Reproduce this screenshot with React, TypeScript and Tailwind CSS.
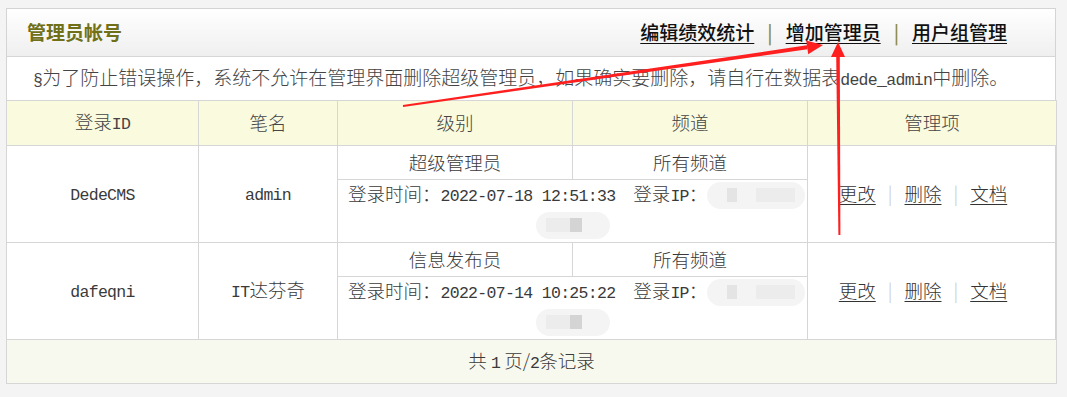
import type { ReactNode } from "react";

const cell = "border border-[#d6d6d6] text-center align-middle font-light";

function M({ children }: { children: ReactNode }) {
  return <span className="font-['Liberation_Mono',monospace] text-[16.5px] tracking-[-0.7px]">{children}</span>;
}

function Blur({ w, dark }: { w: number; dark: number[] }) {
  return (
    <span
      className="inline-flex h-[27px] items-center rounded-full bg-[#f4f4f4] px-[10px] blur-[0.6px]"
      style={{ width: w }}
    >
      {dark.map((c, i) => (
        <span key={i} className="h-[14px] w-[12px]" style={{ background: ["#f4f4f4", "#e4e4e4", "#d4d4d4", "#ececec"][c] }} />
      ))}
    </span>
  );
}

function Links() {
  return (
    <div className="flex items-center justify-center gap-[12px] pr-[18px] text-[#333]">
      <span className="underline underline-offset-[3px]">更改</span>
      <span className="text-[#c8c8c8]">|</span>
      <span className="underline underline-offset-[3px]">删除</span>
      <span className="text-[#c8c8c8]">|</span>
      <span className="underline underline-offset-[3px]">文档</span>
    </div>
  );
}

function LoginInfo({ time }: { time: string }) {
  return (
    <div className="flex flex-col items-center pb-[2px]">
      <div className="flex h-[30px] w-full items-center pl-[10px]">
        <span>
          登录时间：<M>{time}</M>
        </span>
        <span className="ml-[18px]">
          登录<M>IP</M>：
        </span>
        <Blur w={98} dark={[0, 1, 0, 0, 3, 3, 3, 3]} />
      </div>
      <div className="flex h-[30px] items-center">
        <Blur w={74} dark={[3, 3, 2]} />
      </div>
    </div>
  );
}

const rows = [
  { id: "DedeCMS", pen: <M>admin</M>, level: "超级管理员", time: "2022-07-18 12:51:33" },
  {
    id: "dafeqni",
    pen: (
      <>
        <M>IT</M>达芬奇
      </>
    ),
    level: "信息发布员",
    time: "2022-07-14 10:25:22",
  },
];

export default function App() {
  return (
    <div className="relative min-h-[397px] bg-[#f4f4f4] pt-[8px] font-['Noto_Sans_CJK_SC',sans-serif] text-[18.5px] font-light text-[#3a3a3a]">
      <div className="ml-[6px] w-[1050px] border border-[#d4d4d4] bg-white">
        <div className="flex h-[48px] items-center justify-between border-b border-[#d6d6d6] bg-linear-to-b from-white to-[#efefef] pl-[20px] pr-[48px] text-[19px]">
          <span className="font-bold text-[#707018]">管理员帐号</span>
          <div className="flex items-center gap-[13px] font-medium text-[#111]">
            <span className="underline underline-offset-[3px]">编辑绩效统计</span>
            <span className="text-[#8a8a40]">|</span>
            <span className="underline underline-offset-[3px]">增加管理员</span>
            <span className="text-[#8a8a40]">|</span>
            <span className="underline underline-offset-[3px]">用户组管理</span>
          </div>
        </div>
        <div className="flex h-[43px] items-center pl-[26px] text-[19px] text-[#444]">
          <span>
            <M>§</M>为了防止错误操作，系统不允许在管理界面删除超级管理员，如果确实要删除，请自行在数据表<M>dede_admin</M>中删除。
          </span>
        </div>
        <table className="-mx-px -mb-px w-[1050px] table-fixed border-collapse">
          <colgroup>
            <col className="w-[192px]" />
            <col className="w-[139px]" />
            <col className="w-[235px]" />
            <col className="w-[235px]" />
            <col className="w-[249px]" />
          </colgroup>
          <thead>
            <tr className="h-[45px] bg-[#fafadf] text-[#444]">
              <th className={cell}>
                登录<M>ID</M>
              </th>
              <th className={cell}>笔名</th>
              <th className={cell}>级别</th>
              <th className={cell}>频道</th>
              <th className={cell}>管理项</th>
            </tr>
          </thead>
          <tbody>
            {rows.map((r) => (
              <>
                <tr key={r.id + "a"} className="h-[34px]">
                  <td rowSpan={2} className={cell}>
                    <M>{r.id}</M>
                  </td>
                  <td rowSpan={2} className={cell}>
                    {r.pen}
                  </td>
                  <td className={cell}>{r.level}</td>
                  <td className={cell}>所有频道</td>
                  <td rowSpan={2} className={cell}>
                    <Links />
                  </td>
                </tr>
                <tr key={r.id + "b"} className="h-[63px]">
                  <td colSpan={2} className={cell}>
                    <LoginInfo time={r.time} />
                  </td>
                </tr>
              </>
            ))}
            <tr className="h-[44px] bg-[#f8f9ee]">
              <td colSpan={5} className={cell}>
                共 <M>1</M> 页/<M>2</M>条记录
              </td>
            </tr>
          </tbody>
        </table>
      </div>
      <svg className="pointer-events-none absolute left-0 top-0" width="1067" height="397">
        <polygon points="403.1,107 402.9,105 806.9,45.3 807.5,49.3" fill="#ff1f1f" />
        <polygon points="823,45 806.2,40.4 808.2,54.2" fill="#ff1f1f" />
        <polygon points="836.2,56 839.8,56 840.4,235 838.4,235" fill="#ff1f1f" />
        <polygon points="838,42 831,57 845,57" fill="#ff1f1f" />
      </svg>
    </div>
  );
}
